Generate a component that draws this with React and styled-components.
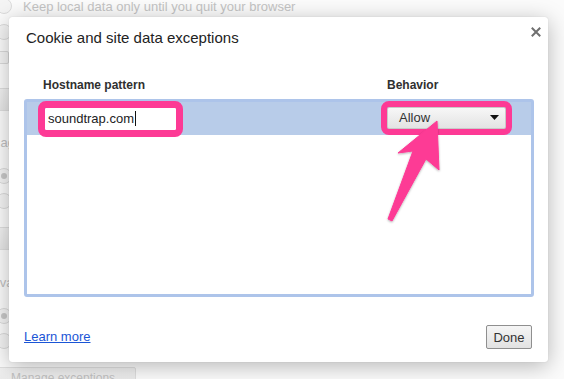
import React from "react";
import styled, { createGlobalStyle } from "styled-components";

const Global = createGlobalStyle`
  html, body { margin: 0; padding: 0; }
  body { width: 564px; height: 379px; overflow: hidden; font-family: "Liberation Sans", Arial, sans-serif; }
`;

const FONT = `"Liberation Sans", Arial, Helvetica, sans-serif`;
const PINK = "#fd3a95";

const Page = styled.div`
  position: relative;
  width: 564px;
  height: 379px;
  overflow: hidden;
  background: #fbfbfb;
  font-family: ${FONT};
`;

/* ---------- faded settings page behind the dialog ---------- */
const Settings = styled.div`
  display: flex;
  flex-direction: column;
  margin: -7px 0 0 -14px;
  color: #c4c4c4;
  font-size: 13px;
`;

const Heading = styled.div`
  height: 20px;
  line-height: 20px;
  margin-top: ${(p) => p.$mt}px;
  margin-bottom: 10px;
  font-size: 13px;
  color: #c0c0c0;
`;

const RadioRow = styled.div`
  display: flex;
  align-items: center;
  gap: 11px;
  height: ${(p) => p.$h || 25}px;
  padding-left: 10px;
`;

const Radio = styled.span`
  box-sizing: border-box;
  width: 16px;
  height: 16px;
  border-radius: 50%;
  border: 1px solid #dcdcdc;
  background: #f4f4f4;
  display: flex;
  align-items: center;
  justify-content: center;
  &::after {
    content: "";
    width: 6px;
    height: 6px;
    border-radius: 50%;
    background: ${(p) => (p.$on ? "#c8c8c8" : "transparent")};
  }
`;

const CheckBox = styled.span`
  box-sizing: border-box;
  width: 13px;
  height: 13px;
  border: 1px solid #dadada;
  border-radius: 2px;
  background: #f4f4f4;
`;

const GhostButton = styled.div`
  box-sizing: border-box;
  align-self: flex-start;
  margin-top: ${(p) => p.$mt}px;
  margin-left: 10px;
  height: 23px;
  line-height: 21px;
  padding: 0 10px 0 14px;
  border: 1px solid #dedede;
  border-radius: 2px;
  background: linear-gradient(#f1f1f1, #e6e6e6);
  color: #c2c2c2;
  font-size: 12px;
  white-space: nowrap;
`;

/* ---------- dialog ---------- */
const Overlay = styled.div`
  position: absolute;
  inset: 0;
  display: flex;
  align-items: flex-start;
  padding: 17px 0 0 9px;
`;

const Dialog = styled.div`
  box-sizing: border-box;
  width: 539px;
  height: 345px;
  background: #fff;
  border-radius: 3px;
  box-shadow: 0 4px 22px rgba(0, 0, 0, 0.28), 0 0 1px rgba(0, 0, 0, 0.2);
  display: flex;
  flex-direction: column;
  padding: 0 14px 13px 15px;
`;

const Header = styled.div`
  display: flex;
  justify-content: space-between;
  align-items: flex-start;
  padding: 12px 0 0 2px;
  height: 52px;
  box-sizing: border-box;
`;

const Title = styled.h1`
  margin: 0;
  font-size: 15px;
  line-height: 18px;
  font-weight: normal;
  color: #222;
`;

const Close = styled.button`
  border: 0;
  padding: 0;
  background: transparent;
  width: 10px;
  height: 10px;
  margin: -2px -7px 0 0;
  display: flex;
`;

const Columns = styled.div`
  display: flex;
  justify-content: space-between;
  padding: 2px 0 0 19px;
  height: 30px;
  align-items: center;
  box-sizing: border-box;
`;

const ColTitle = styled.div`
  font-size: 12px;
  font-weight: bold;
  color: #303030;
  width: ${(p) => (p.$w ? `${p.$w}px` : "auto")};
`;

const ListBox = styled.div`
  box-sizing: border-box;
  height: 198px;
  border: 3px solid #adc4ea;
  border-radius: 3px;
  background: #fff;
  display: flex;
  flex-direction: column;
`;

const Row = styled.div`
  display: flex;
  justify-content: space-between;
  align-items: center;
  height: 33px;
  padding: 0 0 1px 18px;
  box-sizing: border-box;
  background: ${(p) => (p.$selected ? "#b8cce9" : "transparent")};
`;

const HostInput = styled.div`
  box-sizing: border-box;
  width: 131px;
  height: 22px;
  padding: 0 3px;
  background: #fff;
  font-size: 13px;
  line-height: 22px;
  color: #222;
  display: flex;
  align-items: center;
  outline: 7px solid ${PINK};
  border-radius: 1px;
  margin-top: 1px;
`;

const Caret = styled.span`
  width: 1px;
  height: 15px;
  background: #111;
  margin-left: 1px;
`;

const BehaviorCell = styled.div`
  width: 144px;
  display: flex;
`;

const Select = styled.div`
  box-sizing: border-box;
  width: 119px;
  height: 22px;
  padding: 0 6px 0 11px;
  border: 1px solid #c9c9c9;
  border-radius: 2px;
  background: linear-gradient(#f7f7f7, #e3e3e3);
  display: flex;
  align-items: center;
  justify-content: space-between;
  font-size: 13px;
  color: #333;
  outline: 6px solid ${PINK};
  outline-offset: 0;
  margin-top: -1px;
`;

const Footer = styled.div`
  margin-top: auto;
  display: flex;
  justify-content: space-between;
  align-items: center;
`;

const Link = styled.a`
  font-size: 13px;
  color: #1a55d6;
  text-decoration: underline;
  margin-bottom: 2px;
`;

const Button = styled.button`
  box-sizing: border-box;
  width: 46px;
  height: 24px;
  border: 1px solid #8f8f8f;
  border-radius: 2px;
  background: linear-gradient(#f5f5f5, #e2e2e2);
  font-family: ${FONT};
  font-size: 13px;
  color: #333;
  padding: 0;
  margin-right: 2px;
`;

const ArrowLayer = styled.svg`
  position: absolute;
  left: 0;
  top: 0;
  pointer-events: none;
`;

export default function App() {
  return (
    <Page>
      <Global />
      <Settings>
        <RadioRow $h={26}>
          <Radio />
          <span>Keep local data only until you quit your browser</span>
        </RadioRow>
        <RadioRow $h={26}>
          <Radio />
          <span>Block sites from setting any data</span>
        </RadioRow>
        <RadioRow $h={24}>
          <CheckBox />
          <span>Block third-party cookies and site data</span>
        </RadioRow>
        <GhostButton $mt={19}>Manage exceptions...</GhostButton>
        <Heading $mt={22}>Images</Heading>
        <RadioRow>
          <Radio $on />
          <span>Show all images (recommended)</span>
        </RadioRow>
        <RadioRow>
          <Radio />
          <span>Do not show any images</span>
        </RadioRow>
        <GhostButton $mt={14}>Manage exceptions...</GhostButton>
        <Heading $mt={23}>JavaScript</Heading>
        <RadioRow>
          <Radio $on />
          <span>Allow all sites to run JavaScript (recommended)</span>
        </RadioRow>
        <RadioRow>
          <Radio />
          <span>Do not allow any site to run JavaScript</span>
        </RadioRow>
        <GhostButton $mt={14}>Manage exceptions...</GhostButton>
      </Settings>

      <Overlay>
        <Dialog>
          <Header>
            <Title>Cookie and site data exceptions</Title>
            <Close aria-label="Close">
              <svg width="10" height="10" viewBox="0 0 10 10">
                <path d="M1.5 1.5 L8.5 8.5 M8.5 1.5 L1.5 8.5" stroke="#6f6f6f" strokeWidth="2" strokeLinecap="square" />
              </svg>
            </Close>
          </Header>
          <Columns>
            <ColTitle>Hostname pattern</ColTitle>
            <ColTitle $w={147}>Behavior</ColTitle>
          </Columns>
          <ListBox>
            <Row $selected>
              <HostInput>
                soundtrap.com
                <Caret />
              </HostInput>
              <BehaviorCell>
                <Select>
                  <span>Allow</span>
                  <svg width="9" height="5" viewBox="0 0 9 5">
                    <path d="M0 0 H9 L4.5 5 Z" fill="#111" />
                  </svg>
                </Select>
              </BehaviorCell>
            </Row>
          </ListBox>
          <Footer>
            <Link href="#">Learn more</Link>
            <Button>Done</Button>
          </Footer>
        </Dialog>
      </Overlay>

      <ArrowLayer width="564" height="379" viewBox="0 0 564 379">
        <defs>
          <filter id="sh" x="-20%" y="-20%" width="140%" height="140%">
            <feDropShadow dx="0" dy="1" stdDeviation="1.2" floodColor="#000" floodOpacity="0.3" />
          </filter>
        </defs>
        <path
          d="M437 121 L439 170 L426 159 L392 221 L388 219 L413 151 L398 153 Z"
          fill={PINK}
          stroke={PINK}
          strokeWidth="1"
          strokeLinejoin="round"
          filter="url(#sh)"
        />
      </ArrowLayer>
    </Page>
  );
}
